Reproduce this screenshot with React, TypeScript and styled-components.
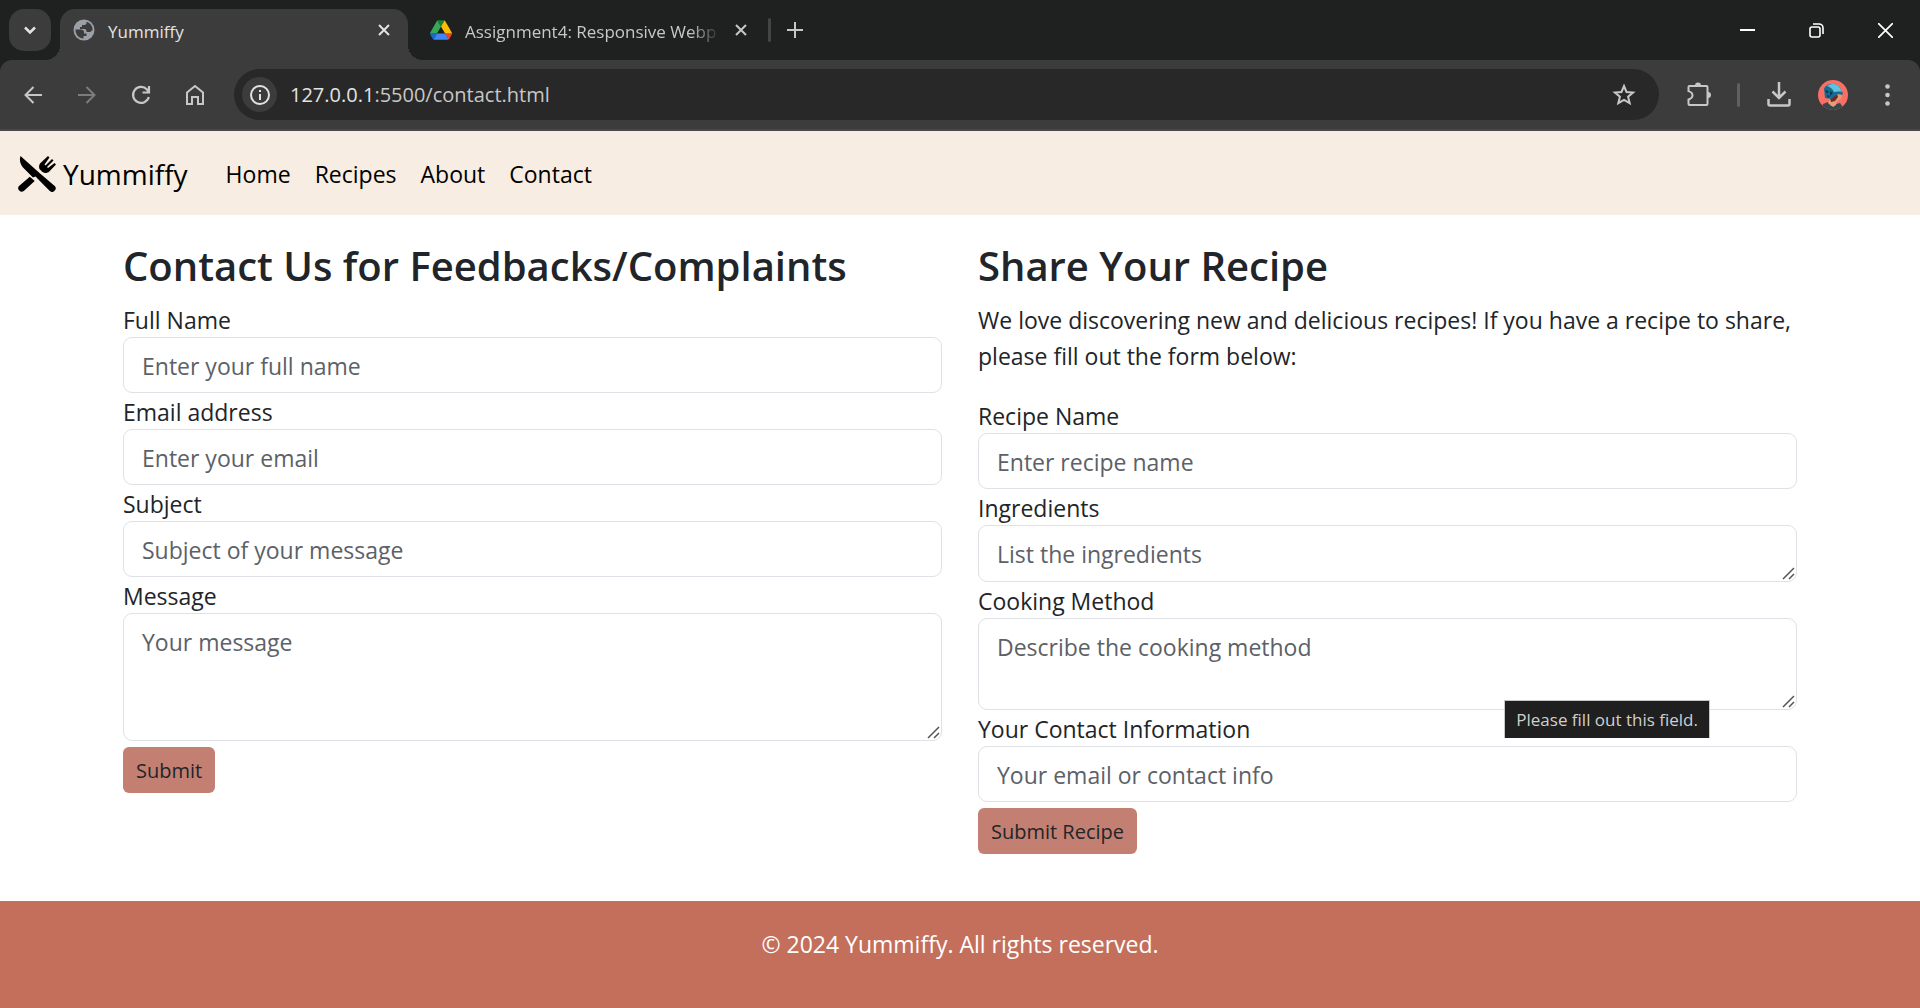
import React from 'react';
import styled, { createGlobalStyle } from 'styled-components';

const Global = createGlobalStyle`
  *, *::before, *::after { box-sizing: border-box; }
  body { margin: 0; background: #fff; color: #212529; font-family: 'Open Sans', 'Noto Sans', sans-serif; font-size: 23px; line-height: 36px; }
  button, input, textarea { font: inherit; color: inherit; }
`;

const Page = styled.div`
  display: flex;
  flex-direction: column;
  min-height: 100vh;
`;

const TabStrip = styled.div`
  display: flex;
  align-items: center;
  height: 60px;
  padding-left: 9px;
  background: #1f2120;
  color: #c7c7c7;
  font-size: 17px;
  line-height: 24px;
`;

const IconButton = styled.button<{ $size?: number; $round?: number; $bg?: string }>`
  display: flex;
  flex: none;
  align-items: center;
  justify-content: center;
  width: ${(p) => p.$size ?? 42}px;
  height: ${(p) => p.$size ?? 42}px;
  padding: 0;
  border: 0;
  border-radius: ${(p) => p.$round ?? 21}px;
  background: ${(p) => p.$bg ?? 'transparent'};
  color: inherit;
`;

const Tab = styled.div<{ $active?: boolean }>`
  position: relative;
  display: flex;
  align-self: flex-end;
  align-items: center;
  width: 348px;
  height: 51px;
  margin-left: 9px;
  padding: 0 12px 9px 13px;
  border-radius: 15px 15px 0 0;
  background: ${(p) => (p.$active ? '#3c3c3c' : 'transparent')};
  color: ${(p) => (p.$active ? '#e3e3e3' : '#c7c7c7')};

  &::before, &::after {
    content: '';
    position: absolute;
    bottom: 0;
    width: 15px;
    height: 15px;
    display: ${(p) => (p.$active ? 'block' : 'none')};
  }
  &::before { left: -15px; background: radial-gradient(circle at 0 0, transparent 15px, #3c3c3c 15px); }
  &::after { right: -15px; background: radial-gradient(circle at 100% 0, transparent 15px, #3c3c3c 15px); }
`;

const TabTitle = styled.span<{ $fade?: boolean }>`
  flex: 1;
  min-width: 0;
  margin: 0 8px 0 13px;
  padding-top: 3px;
  white-space: nowrap;
  mask-image: ${(p) => (p.$fade ? 'linear-gradient(to right, #000 88%, transparent)' : 'none')};
`;

const Divider = styled.span<{ $color: string }>`
  flex: none;
  width: 3px;
  height: 24px;
  border-radius: 2px;
  background: ${(p) => p.$color};
`;

const NewTab = styled.div`
  display: flex;
  align-items: center;
  gap: 3px;
  margin-left: 3px;
`;

const WindowControls = styled.div`
  display: flex;
  margin-left: auto;
  color: #fff;
`;

const WindowButton = styled(IconButton)`
  width: 69px;
`;

const Toolbar = styled.div`
  display: flex;
  align-items: center;
  height: 71px;
  padding: 0 12px;
  border-bottom: 2px solid #484848;
  border-radius: 12px 12px 0 0;
  background: #3c3c3c;
  color: #c7c7c7;
`;

const ToolbarBack = styled.div`
  background: #1f2120;
`;

const NavButtons = styled.div`
  display: flex;
  gap: 12px;
  margin-right: 18px;
`;

const AddressBar = styled.div`
  display: flex;
  flex: 1;
  align-items: center;
  height: 51px;
  padding: 0 14px 0 8px;
  border-radius: 26px;
  background: #282828;
`;

const Address = styled.div`
  flex: 1;
  margin-left: 13px;
  font-size: 20px;
  line-height: 28px;
  color: #c7c7c7;
`;

const Host = styled.span`
  color: #e3e3e3;
`;

const Actions = styled.div`
  display: flex;
  align-items: center;
  gap: 18px;
  margin-left: 18px;
`;

const SiteNav = styled.nav`
  display: flex;
  align-items: center;
  gap: 26px;
  height: 84px;
  padding: 2px 18px 0;
  background: #f7ede2;
`;

const Brand = styled.a`
  display: flex;
  align-items: center;
  gap: 7px;
  color: #000;
  font-size: 28px;
  line-height: 45px;
  text-decoration: none;
`;

const NavList = styled.ul`
  display: flex;
  margin: 0;
  padding: 0;
  list-style: none;
`;

const NavLink = styled.a`
  display: block;
  padding: 12px;
  color: #000;
  text-decoration: none;
`;

const Main = styled.main`
  display: grid;
  grid-template-columns: 1fr 1fr;
  gap: 36px;
  width: 100%;
  max-width: 1710px;
  margin: 0 auto;
  padding: 24px 18px 47px;
`;

const Title = styled.h2`
  margin: 0 0 10px;
  padding-top: 2px;
  font-size: 40px;
  font-weight: 600;
  line-height: 50px;
`;

const Intro = styled.p`
  margin: 0 0 23px;
  padding-top: 1px;
`;

const Field = styled.div`
  position: relative;
  display: flex;
  flex-direction: column;
`;

const Label = styled.label`
  padding-top: 2px;
  line-height: 34px;
`;

const fieldLook = `
  width: 100%;
  padding: 10px 18px 8px;
  border: 1px solid #dee2e6;
  border-radius: 9px;
  background: #fff;
  outline: 0;
  &::placeholder { color: #5c6167; opacity: 1; }
`;

const Input = styled.input`
  ${fieldLook}
  height: 56px;
`;

const TextArea = styled.textarea<{ $height: number }>`
  ${fieldLook}
  display: block;
  height: ${(p) => p.$height}px;
  resize: none;
  overflow: hidden;
`;

const Grip = styled.svg`
  position: absolute;
  right: 2px;
  bottom: 2px;
`;

const SubmitButton = styled.button`
  display: block;
  height: 46px;
  margin-top: 6px;
  padding: 2px 13px 0;
  border: 0;
  border-radius: 6px;
  background: #c38072;
  color: #212529;
  font-size: 20px;
  line-height: 32px;
`;

const Tooltip = styled.div`
  position: absolute;
  right: 87px;
  bottom: -28px;
  padding: 6px 11px;
  border: 1px solid #c7c7c7;
  border-bottom: 0;
  background: #1f1f1f;
  color: #cfcfcf;
  font-size: 17px;
  line-height: 25px;
  white-space: nowrap;
`;

const Footer = styled.footer`
  flex: 1;
  padding: 25px 24px;
  background: #c46f5b;
  color: #fff;
  text-align: center;
`;

const stroke = { fill: 'none', stroke: 'currentColor', strokeWidth: 2 } as const;

const CloseIcon = () => (
  <svg width="12" height="12" viewBox="0 0 12 12" {...stroke}><path d="M1 1l10 10M11 1L1 11" /></svg>
);

const GlobeIcon = () => (
  <svg width="22" height="22" viewBox="0 0 22 22">
    <circle cx="11" cy="11" r="10.5" fill="#9aa0a6" />
    <path d="M2.500 10.500h3.500c3 0 5 .5 5 2.500v1.500h2.500v2.500h-3v2.500C6 19.500 2.300 15.500 2.500 10.500z" fill="#3c3c3c" />
    <path d="M13.500 2.800v1.200c0 1.200-1 2-2.200 2H9v2H7v2h4.500c1.300 0 2 1 2 2v1h3c1 0 2-.6 2.200-1.500h.8C20 7.500 17.500 4 13.500 2.800z" fill="#3c3c3c" />
  </svg>
);

const DriveIcon = () => (
  <svg width="22" height="20" viewBox="0 0 87.300 78">
    <path d="m6.600 66.850 3.850 6.650c.8 1.400 1.950 2.500 3.300 3.300l13.750-23.800h-27.500c0 1.550.4 3.100 1.200 4.500z" fill="#1967d2" />
    <path d="m43.650 25-13.750-23.800c-1.350.8-2.500 1.900-3.300 3.300l-25.400 44a9.060 9.060 0 0 0 -1.200 4.500h27.500z" fill="#34a853" />
    <path d="m73.550 76.800c1.350-.8 2.500-1.900 3.300-3.300l1.600-2.750 7.650-13.250c.8-1.400 1.200-2.950 1.200-4.500h-27.500l5.850 11.500z" fill="#ea4335" />
    <path d="m43.650 25 13.750-23.800c-1.350-.8-2.900-1.200-4.500-1.200h-18.500c-1.600 0-3.150.45-4.500 1.200z" fill="#188038" />
    <path d="m59.800 53h-32.300l-13.750 23.800c1.350.8 2.900 1.200 4.500 1.200h50.800c1.600 0 3.150-.45 4.500-1.200z" fill="#4285f4" />
    <path d="m73.400 26.500-12.700-22c-.8-1.400-1.950-2.500-3.300-3.300l-13.750 23.800 16.150 28h27.450c0-1.550-.4-3.100-1.200-4.500z" fill="#fbbc04" />
  </svg>
);

const ExtensionIcon = () => (
  <svg width="28" height="26" viewBox="-2 1 28 26">
    <path d="M3.500 5h17a1 1 0 0 1 1 1v17a1 1 0 0 1-1 1h-17a1 1 0 0 1-1-1v-4.500c3-1 4-2.600 4-4.200s-1-3.200-4-4.200V6a1 1 0 0 1 1-1z" {...stroke} />
    <path d="M9 4.500a3 3 0 0 1 6 0zM22 11a3 3 0 0 1 0 6z" fill="currentColor" />
  </svg>
);

const Avatar = () => (
  <svg width="30" height="30" viewBox="0 0 30 30">
    <clipPath id="avatar"><circle cx="15" cy="15" r="15" /></clipPath>
    <g clipPath="url(#avatar)">
      <rect width="30" height="30" fill="#f96f65" />
      <path d="M3 30l2-6 5-2 3 4 5-2 4-1 5 7z" fill="#38474c" />
      <path d="M13 16l9-3 2 2-1 4-4 2-1 4-3 2-5-4z" fill="#e99b78" />
      <path d="M12 18l7-4 1 3-3 4-4 1z" fill="#6b2c25" />
      <path d="M6 9c1-3 4-5 8-5 5 0 8 3 9 6l2 3-1 2c-3-1-5-1-7 1l-4 3-6-1z" fill="#176d91" />
      <path d="M9 6c5-4 12-2 14 4l1 2c-3-1-6 0-8 0-1-3-4-5-7-6z" fill="#5fc3de" />
      <path d="M7 10l4 1-2 3zM12 11l3 2-3 3zM9 15l3 1-2 2z" fill="#0b3850" />
    </g>
  </svg>
);

const CutleryIcon = () => (
  <svg width="38" height="36" viewBox="0 0 38 36">
    <path d="M2.500 0C1 4 2.500 8.500 5 11.500L15 21.500l2.500-1 14 14.300a3.600 3.600 0 0 0 5.500-4.600L21.500 17z" />
    <path d="M11.800 20.800l4.900 4.200L5.800 35a3.500 3.500 0 0 1-4.800-5z" />
    <path d="M30 0l-7.500 7c-1.500 1.600-1.800 4-1 6l3 3c2.500 1.500 5 1 6.800-.6L38 8.500l-1.500-1.500-6.500 5-1-1 6.500-6.500L34 3l-6.500 6.500-1-1L31.500 1.500z" />
  </svg>
);

type FieldProps = { id: string; label: string; hint: string; type?: string; height?: number; children?: React.ReactNode };

const FormField = ({ id, label, hint, type = 'text', height, children }: FieldProps) => (
  <Field>
    <Label htmlFor={id}>{label}</Label>
    {height ? <TextArea id={id} placeholder={hint} $height={height} /> : <Input id={id} type={type} placeholder={hint} />}
    {height && (
      <Grip width="13" height="13" viewBox="0 0 13 13" fill="none" stroke="#555" strokeWidth="1.500">
        <path d="M1 12L12 1M7 12l5-5" />
      </Grip>
    )}
    {children}
  </Field>
);

export default function App() {
  return (
    <Page>
      <Global />
      <TabStrip>
        <IconButton $round={15} $bg="#3c3c3c" aria-label="Search tabs">
          <svg width="14" height="9" viewBox="0 0 14 9" {...stroke} stroke="#e3e3e3" strokeWidth="2.500"><path d="M2 1.500l5 5 5-5" /></svg>
        </IconButton>
        <Tab $active>
          <GlobeIcon />
          <TabTitle>Yummiffy</TabTitle>
          <IconButton $size={24} aria-label="Close tab"><CloseIcon /></IconButton>
        </Tab>
        <Tab>
          <DriveIcon />
          <TabTitle $fade>Assignment4: Responsive Webp</TabTitle>
          <IconButton $size={24} aria-label="Close tab"><CloseIcon /></IconButton>
        </Tab>
        <NewTab>
          <Divider $color="#444" />
          <IconButton aria-label="New tab">
            <svg width="16" height="16" viewBox="0 0 16 16" {...stroke}><path d="M8 0v16M0 8h16" /></svg>
          </IconButton>
        </NewTab>
        <WindowControls>
          <WindowButton aria-label="Minimize"><svg width="15" height="15" viewBox="0 0 15 15" {...stroke}><path d="M0 7h15" /></svg></WindowButton>
          <WindowButton aria-label="Restore">
            <svg width="15" height="15" viewBox="0 0 15 15" {...stroke} strokeWidth="1.600"><rect x="1" y="4" width="10" height="10" rx="2" /><path d="M4 1h6a4 4 0 0 1 4 4v6" /></svg>
          </WindowButton>
          <WindowButton aria-label="Close"><svg width="15" height="15" viewBox="0 0 15 15" {...stroke} strokeWidth="1.700"><path d="M0 0l15 15M15 0L0 15" /></svg></WindowButton>
        </WindowControls>
      </TabStrip>
      <ToolbarBack>
        <Toolbar>
          <NavButtons>
            <IconButton aria-label="Back"><svg width="18" height="18" viewBox="0 0 18 18" {...stroke}><path d="M18 9H2M9.500 1l-8 8 8 8" /></svg></IconButton>
            <IconButton aria-label="Forward"><svg width="18" height="18" viewBox="0 0 18 18" {...stroke} stroke="#7c7c7c"><path d="M0 9h16M8.500 1l8 8-8 8" /></svg></IconButton>
            <IconButton aria-label="Reload"><svg width="20" height="20" viewBox="0 0 20 20" {...stroke} strokeWidth="2.200"><path d="M17.800 12A8 8 0 1 1 16 4.500L18 7M18 1v6.500h-6.500" /></svg></IconButton>
            <IconButton aria-label="Home"><svg width="20" height="22" viewBox="0 0 20 22" {...stroke}><path d="M2 8.500l8-6.500 8 6.500V20h-5v-7H7v7H2z" /></svg></IconButton>
          </NavButtons>
          <AddressBar>
            <IconButton $size={35} $bg="#3c3c3c" aria-label="Site information">
              <svg width="20" height="20" viewBox="0 0 20 20" {...stroke} stroke="#e3e3e3"><circle cx="10" cy="10" r="9" /><path d="M10 9v6M10 5v2" /></svg>
            </IconButton>
            <Address><Host>127.0.0.1</Host>:5500/contact.html</Address>
            <IconButton aria-label="Bookmark">
              <svg width="24" height="23" viewBox="0 0 24 23" {...stroke}><path d="M12 3l2.500 6 6.600.5-5 4.200 1.600 6.500L12 16.800l-5.700 3.400 1.600-6.500-5-4.200 6.600-.5z" /></svg>
            </IconButton>
          </AddressBar>
          <Actions>
            <IconButton aria-label="Extensions"><ExtensionIcon /></IconButton>
            <Divider $color="#606060" />
            <IconButton aria-label="Downloads">
              <svg width="24" height="25" viewBox="0 0 24 25" {...stroke} strokeWidth="2.500"><path d="M12 0v16M5.500 9.500L12 16l6.500-6.500M1.500 17v5a1.500 1.500 0 0 0 1.500 1.500h18a1.500 1.500 0 0 0 1.500-1.500v-5" /></svg>
            </IconButton>
            <IconButton aria-label="Profile" $size={30}><Avatar /></IconButton>
            <IconButton aria-label="Menu">
              <svg width="5" height="22" viewBox="0 0 5 22" fill="currentColor"><circle cx="2.500" cy="2.500" r="2.300" /><circle cx="2.500" cy="11" r="2.300" /><circle cx="2.500" cy="19.500" r="2.300" /></svg>
            </IconButton>
          </Actions>
        </Toolbar>
      </ToolbarBack>
      <SiteNav>
        <Brand href="#home"><CutleryIcon />Yummiffy</Brand>
        <NavList>
          {['Home', 'Recipes', 'About', 'Contact'].map((name) => (
            <li key={name}><NavLink href={`#${name.toLowerCase()}`}>{name}</NavLink></li>
          ))}
        </NavList>
      </SiteNav>
      <Main>
        <form>
          <Title>Contact Us for Feedbacks/Complaints</Title>
          <FormField id="name" label="Full Name" hint="Enter your full name" />
          <FormField id="email" label="Email address" hint="Enter your email" type="email" />
          <FormField id="subject" label="Subject" hint="Subject of your message" />
          <FormField id="message" label="Message" hint="Your message" height={128} />
          <SubmitButton type="button">Submit</SubmitButton>
        </form>
        <form>
          <Title>Share Your Recipe</Title>
          <Intro>We love discovering new and delicious recipes! If you have a recipe to share, please fill out the form below:</Intro>
          <FormField id="recipe" label="Recipe Name" hint="Enter recipe name" />
          <FormField id="ingredients" label="Ingredients" hint="List the ingredients" height={57} />
          <FormField id="method" label="Cooking Method" hint="Describe the cooking method" height={92}>
            <Tooltip role="tooltip">Please fill out this field.</Tooltip>
          </FormField>
          <FormField id="contact-info" label="Your Contact Information" hint="Your email or contact info" />
          <SubmitButton type="button">Submit Recipe</SubmitButton>
        </form>
      </Main>
      <Footer>© 2024 Yummiffy. All rights reserved.</Footer>
    </Page>
  );
}
